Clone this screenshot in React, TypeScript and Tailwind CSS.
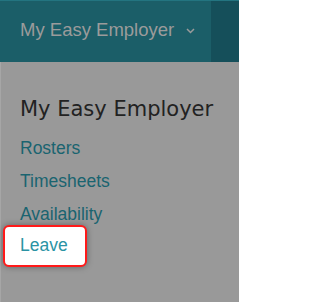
export default function App() {
  const links = ["Rosters", "Timesheets", "Availability"];
  return (
    <div className="w-[239px] h-[302px] bg-[#999999] overflow-hidden" style={{ fontFamily: '"Liberation Sans", Arial, sans-serif' }}>
      {/* Top bar */}
      <div className="flex h-[62px] border-t border-[#237480]">
        <div className="flex w-[211px] items-center bg-[#1b5e68] pl-[20px] pb-[4px]">
          <span className="text-[18.5px] text-[#9b9b9b]">My Easy Employer</span>
          <svg className="ml-[12px] mt-[2px]" width="9" height="6" viewBox="0 0 9 6" fill="none">
            <path d="M1 1l3.5 3.5L8 1" stroke="#9b9b9b" strokeWidth="1.5" />
          </svg>
        </div>
        <div className="flex-1 bg-[#154f5a]" />
      </div>

      {/* Menu */}
      <div className="border-l border-[#a6a6a6] h-full pt-[34px]">
        <h2 className="pl-[19px] text-[21px] leading-[26px] text-[#222222]" style={{ fontFamily: '"DejaVu Sans", sans-serif' }}>
          My Easy Employer
        </h2>
        <ul className="mt-[9.5px] flex flex-col">
          {links.map((l) => (
            <li key={l} className="pl-[19px] h-[33px] leading-[33px] text-[17.5px] text-[#1a6470]">
              {l}
            </li>
          ))}
          <li className="ml-[2px] -mt-[5.5px] flex h-[42px] w-[84px] items-center rounded-[6px] border-2 border-[#ff1a1a] bg-white pl-[15px] pb-[1px] text-[17.5px] text-[#2a93a4] shadow-[0_0_6px_rgba(0,0,0,0.35)]">
            Leave
          </li>
        </ul>
      </div>
    </div>
  );
}
